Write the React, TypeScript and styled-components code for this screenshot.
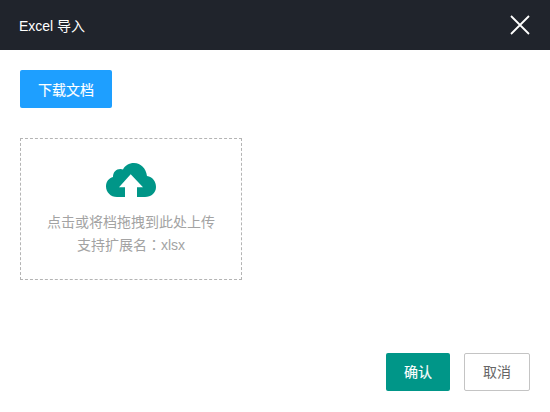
import styled, { createGlobalStyle } from 'styled-components';

const GlobalStyle = createGlobalStyle`
    html, body {
        margin: 0;
        padding: 0;
        background: #fff;
    }
    body {
        font-family: "Liberation Sans", "Noto Sans CJK SC", sans-serif;
    }
`;

const Dialog = styled.div`
    width: 550px;
    height: 412px;
    display: flex;
    flex-direction: column;
    overflow: hidden;
`;

const Header = styled.div`
    height: 50px;
    flex: none;
    padding: 0 20px 0 19px;
    background: #20242c;
    display: flex;
    align-items: center;
    justify-content: space-between;
`;

const Title = styled.span`
    color: #fff;
    font-size: 14px;
`;

const CloseIcon = styled.svg`
    width: 20px;
    height: 20px;
    display: block;
`;

const Body = styled.div`
    flex: 1;
    padding: 20px 20px 0;
    display: flex;
    flex-direction: column;
    align-items: flex-start;
`;

const Button = styled.button<{ $bg: string; $nudge?: number }>`
    height: 38px;
    padding: 0 0 ${(p) => p.$nudge ?? 2}px;
    border: none;
    border-radius: 2px;
    background: ${(p) => p.$bg};
    color: #fff;
    font-family: inherit;
    font-size: 14px;
    -webkit-text-stroke: 0.15px #fff;
`;

const DownloadButton = styled(Button)`
    width: 92px;
`;

const UploadBox = styled.div`
    box-sizing: border-box;
    width: 222px;
    height: 142px;
    margin-top: 30px;
    padding-top: 24px;
    border: 1px dashed #b4b4b4;
    display: flex;
    flex-direction: column;
    align-items: center;
`;

const CloudIcon = styled.svg`
    width: 52px;
    height: 36px;
    display: block;
`;

const Hint = styled.div`
    margin-top: 12px;
    color: #a3a3a3;
    font-size: 14px;
    line-height: 22px;
    text-align: center;
`;

const Colon = styled.span`
    font-family: "Noto Sans CJK TC", sans-serif;
`;

const Footer = styled.div`
    flex: none;
    height: 59px;
    padding-right: 20px;
    display: flex;
    justify-content: flex-end;
    gap: 14px;
    align-items: flex-start;
`;

const ConfirmButton = styled(Button)`
    width: 64px;
`;

const CancelButton = styled.button`
    box-sizing: border-box;
    width: 66px;
    height: 38px;
    padding: 0 0 2px;
    border: 1px solid #c4c4c4;
    border-radius: 2px;
    background: #fff;
    color: #666;
    font-family: inherit;
    font-size: 14px;
`;

function App() {
    return (
        <Dialog>
            <GlobalStyle />
            <Header>
                <Title>Excel 导入</Title>
                <CloseIcon viewBox="0 0 20 20">
                    <path d="M1 1 L19 19 M19 1 L1 19" stroke="#fff" strokeWidth="1.8" fill="none" />
                </CloseIcon>
            </Header>
            <Body>
                <DownloadButton $bg="#1e9fff" $nudge={0}>下载文档</DownloadButton>
                <UploadBox>
                    <CloudIcon viewBox="0 0 52 36">
                        <path
                            fill="#009688"
                            d="M12 34 C5.500 34 1 29 1 23.500 C1 18.500 4 15 8 14 C8 9 11 6 15.500 6 C16.500 6 17.500 6.200 18 6.500 C20 2.500 24 0 29 0 C36 0 41 5.500 42 13 C47.500 14 51 18 51 24 C51 30 46 34 40 34 L32 34 L32 24.300 L38 24.300 L25.700 11.300 L14 24.300 L20 24.300 L20 34 Z"
                        />
                    </CloudIcon>
                    <Hint>
                        点击或将档拖拽到此处上传
                        <br />
                        支持扩展名<Colon>：</Colon>xlsx
                    </Hint>
                </UploadBox>
            </Body>
            <Footer>
                <ConfirmButton $bg="#009688">确认</ConfirmButton>
                <CancelButton>取消</CancelButton>
            </Footer>
        </Dialog>
    );
}

export default App;
